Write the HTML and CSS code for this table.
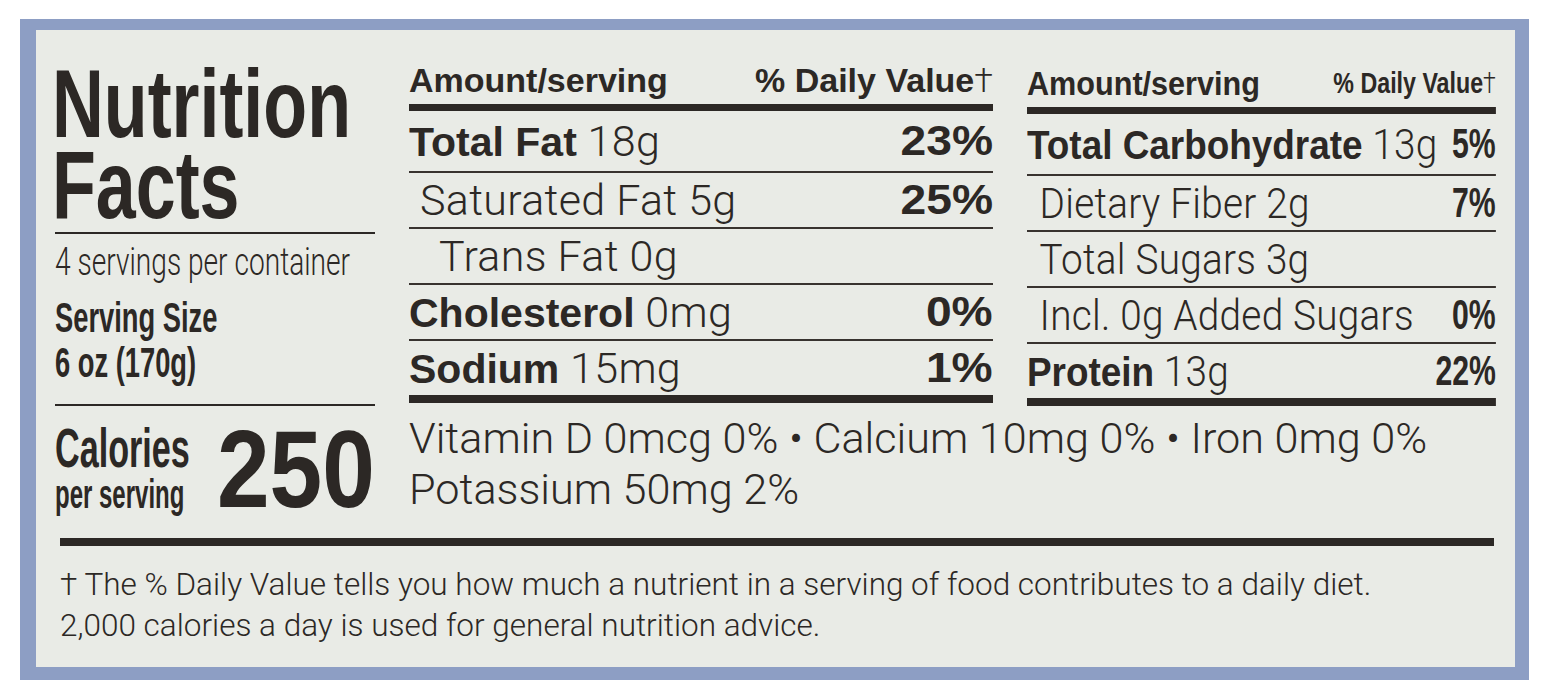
FILE: index.html
```html
<!DOCTYPE html>
<html lang="en">
<head>
<meta charset="utf-8">
<title>Nutrition Facts</title>
<link rel="stylesheet" href="styles.css">
</head>
<body>
<div class="frame">
  <div class="panel">
    <div class="grid">
      <section class="id-block">
        <div class="title-wrap">
          <h1 class="title"><span class="tline">Nutrition</span><span class="tline">Facts</span></h1>
        </div>
        <p class="servings">4 servings per container</p>
        <p class="ssize">Serving Size<br>6 oz (170g)</p>
      </section>

      <section class="facts facts-a">
        <div class="fhead"><span class="h-amt">Amount/serving</span><span class="h-dv">% Daily Value<span class="dag">†</span></span></div>
        <div class="frow first"><span class="lbl"><b>Total Fat</b> 18g</span><b class="pct">23%</b></div>
        <div class="frow"><span class="lbl ind1">Saturated Fat 5g</span><b class="pct">25%</b></div>
        <div class="frow"><span class="lbl ind2">Trans Fat 0g</span></div>
        <div class="frow"><span class="lbl"><b>Cholesterol</b> 0mg</span><b class="pct">0%</b></div>
        <div class="frow last"><span class="lbl"><b>Sodium</b> 15mg</span><b class="pct">1%</b></div>
      </section>

      <section class="facts facts-b">
        <div class="fhead"><span class="h-amt">Amount/serving</span><span class="h-dv">% Daily Value<span class="dag">†</span></span></div>
        <div class="frow first"><span class="lbl"><b>Total Carbohydrate</b> 13g</span><b class="pct">5%</b></div>
        <div class="frow"><span class="lbl ind">Dietary Fiber 2g</span><b class="pct">7%</b></div>
        <div class="frow"><span class="lbl ind">Total Sugars 3g</span></div>
        <div class="frow"><span class="lbl ind">Incl. 0g Added Sugars</span><b class="pct">0%</b></div>
        <div class="frow last"><span class="lbl"><b>Protein</b> 13g</span><b class="pct">22%</b></div>
      </section>

      <section class="calories">
        <div class="cal-words">
          <span class="cal-big">Calories</span>
          <span class="cal-small">per serving</span>
        </div>
        <div class="cal-num">250</div>
      </section>

      <section class="vitamins">
        <p>Vitamin D 0mcg 0% • Calcium 10mg 0% • Iron 0mg 0%</p>
        <p>Potassium 50mg 2%</p>
      </section>
    </div>
    <div class="heavy-rule"></div>
    <p class="footnote">† The % Daily Value tells you how much a nutrient in a serving of food contributes to a daily diet.<br>2,000 calories a day is used for general nutrition advice.</p>
  </div>
</div>
</body>
</html>
```

FILE: styles.css
```css
* { box-sizing: border-box; margin: 0; padding: 0; }
html, body { background: #ffffff; }
body {
  font-family: "Liberation Sans", Arial, sans-serif;
  color: #2c2825;
}

.frame {
  margin: 19px 0 0 20px;
  width: 1509px;
  height: 661px;
  background: #8d9ec4;
  padding: 11px 14px 13px 16px;
}
.panel {
  height: 100%;
  background: #e9ebe6;
  padding: 0 19px;
  overflow: hidden;
}

.grid {
  display: grid;
  grid-template-columns: 320px 584px 469px;
  justify-content: space-between;
}

/* ---------- left identity block ---------- */
.id-block {
  grid-column: 1;
  grid-row: 1;
  padding-bottom: 18px;
  border-bottom: 2px solid #2c2825;
}
.title-wrap {
  margin-top: 33px;
  padding-bottom: 7px;
  border-bottom: 2px solid #2c2825;
}
.title {
  margin-left: -3px;
  font-weight: 700;
  font-size: 97px;
  white-space: nowrap;
  transform: scaleX(0.74);
  transform-origin: 0 0;
}
.tline {
  display: block;
  height: 81px;
  line-height: 81px;
}
.servings {
  margin-top: 8px;
  font-family: Roboto, "Liberation Sans", sans-serif;
  font-weight: 300;
  font-size: 38px;
  line-height: 40px;
  white-space: nowrap;
  transform: scaleX(0.74);
  transform-origin: 0 0;
}
.ssize {
  margin-top: 13px;
  font-weight: 700;
  font-size: 42px;
  line-height: 45px;
  white-space: nowrap;
  transform: scaleX(0.65);
  transform-origin: 0 0;
}

/* ---------- nutrient tables ---------- */
.facts { grid-row: 1; }
.facts-a { grid-column: 2; }
.facts-b {
  grid-column: 3;
  width: 521px;
  margin-top: 3px;
  transform: scaleX(0.9);
  transform-origin: 0 0;
}
.fhead {
  height: 81px;
  padding-bottom: 9px;
  border-bottom: 7px solid #2c2825;
  display: flex;
  justify-content: space-between;
  align-items: flex-end;
  font-weight: 700;
  font-size: 34px;
  line-height: 30px;
  white-space: nowrap;
}
.dag {
  font-family: Roboto, "Liberation Sans", sans-serif;
  font-weight: 300;
}
.facts-b .h-dv {
  display: inline-block;
  font-size: 30px;
  transform: scaleX(0.86);
  transform-origin: 100% 100%;
}

.frow {
  display: flex;
  justify-content: space-between;
  align-items: center;
  height: 56px;
  border-bottom: 2px solid #38332f;
  white-space: nowrap;
  line-height: 42px;
}
.frow.first { height: 62px; }
.frow.last {
  height: 62px;
  border-bottom: 8px solid #2c2825;
}
.lbl {
  font-family: Roboto, "Liberation Sans", sans-serif;
  font-weight: 300;
  font-size: 43px;
  letter-spacing: 0.3px;
}
.lbl b {
  font-family: "Liberation Sans", Arial, sans-serif;
  font-weight: 700;
  font-size: 41px;
  letter-spacing: 0;
}
.ind1 { padding-left: 11px; }
.ind2 { padding-left: 30px; }
.ind { padding-left: 14px; }

.pct {
  display: inline-block;
  font-weight: 700;
  font-size: 42px;
  transform: scaleX(1.1);
  transform-origin: 100% 50%;
}
.facts-b .pct { transform: scaleX(0.8); }

/* ---------- calories ---------- */
.calories {
  grid-column: 1;
  grid-row: 2;
  display: flex;
}
.cal-words {
  width: 162px;
  display: flex;
  flex-direction: column;
}
.cal-big {
  margin-top: 17px;
  font-weight: 700;
  font-size: 56px;
  line-height: 50px;
  white-space: nowrap;
  transform: scaleX(0.61);
  transform-origin: 0 0;
}
.cal-small {
  margin-top: 1px;
  font-weight: 700;
  font-size: 40px;
  line-height: 40px;
  white-space: nowrap;
  transform: scaleX(0.6);
  transform-origin: 0 0;
}
.cal-num {
  margin-top: 18px;
  font-weight: 700;
  font-size: 110px;
  line-height: 90px;
  transform: scaleX(0.86);
  transform-origin: 0 0;
}

/* ---------- vitamins ---------- */
.vitamins {
  grid-column: 2 / 4;
  grid-row: 2;
  margin-top: 7px;
  font-family: Roboto, "Liberation Sans", sans-serif;
  font-weight: 300;
  font-size: 43.2px;
  line-height: 51px;
  white-space: nowrap;
}

/* ---------- footer ---------- */
.heavy-rule {
  margin: 23px 2px 0 5px;
  height: 8px;
  background: #2c2825;
}
.footnote {
  margin: 18px 0 0 5px;
  font-family: Roboto, "Liberation Sans", sans-serif;
  font-weight: 300;
  font-size: 31.5px;
  line-height: 41px;
  white-space: nowrap;
}
```
